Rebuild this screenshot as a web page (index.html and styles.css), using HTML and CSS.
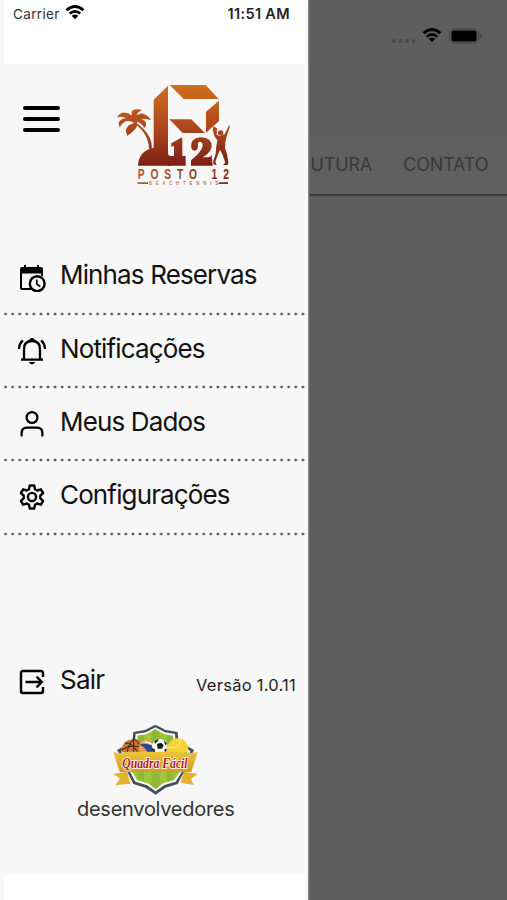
FILE: index.html
```html
<!DOCTYPE html>
<html lang="pt-BR">
<head>
<meta charset="utf-8">
<title>Posto 12</title>
<link rel="stylesheet" href="styles.css">
</head>
<body>
<div class="app">
  <aside class="drawer">
    <div class="status">
      <span class="carrier">Carrier</span>
      <svg class="wifi" viewBox="0 0 20 15"><path d="M1.5 5.2Q10-2.2 18.5 5.2M4.7 8.6Q10 4 15.3 8.6" fill="none" stroke="#000" stroke-width="2.7"/><path d="M6.7 10.8Q10 8.2 13.3 10.8L10 14.3Z"/></svg>
      <time class="clock">11:51 AM</time>
    </div>
    <header class="head">
      <button class="burger" aria-label="Menu"><i></i><i></i><i></i></button>
      <svg class="logo" viewBox="0 0 420 360">
        <defs><linearGradient id="rust" gradientUnits="userSpaceOnUse" x1="0" y1="30" x2="0" y2="300"><stop offset="0" stop-color="#ce701f"/><stop offset=".45" stop-color="#b0491d"/><stop offset="1" stop-color="#6e1714"/></linearGradient>
        <linearGradient id="plate" x2="1"><stop stop-color="#b9571f"/><stop offset="1" stop-color="#7d2a1a"/></linearGradient></defs>
        <g fill="url(#rust)">
          <path d="M146 74L189 32V236Q190 243 198 243V272H99Q101 227 146 218Z"/>
          <path d="M194 30H302L341 72H236Z"/>
          <path d="M342 77V138L303 173V110Z"/>
          <path d="M193 133H259L300 174H233Z"/>
          <path d="M188 243H207V212L199 216V205L228 188H232V243H242V272H188Z"/>
          <path d="M259 219Q255 188 289 187Q320 189 320 214Q319 232 293 247H310Q317 246 320 240L323 272H258V256Q291 231 293 211Q293 200 284 200Q277 201 279 213Q279 226 268 227Q260 226 259 219Z"/>
          <path d="M88 142Q118 157 133 186Q142 205 140 222L132 221Q132 192 111 166Q98 151 86 148Z"/>
          <path d="M88 143Q69 134 57 142Q45 152 45 158Q36 143 47 135Q56 128 65 130Q51 122 36 127Q45 111 62 113Q74 114 81 122Q74 103 96 103Q106 102 110 107Q98 109 95 121Q108 111 122 119Q135 127 137 136Q122 130 109 133Q122 137 123 145Q125 154 117 159Q113 145 96 140Q99 153 90 163Q81 174 67 182Q57 162 72 151Z"/>
          <circle cx="347" cy="174" r="8"/>
          <path d="M372 151L375 154L365 184L361 202L360 219L366 237L370 262L368 270H354L361 263L352 238L345 224L337 244L331 260L335 271L325 268V257L332 237L334 214L337 195L329 185L323 164L325 154L336 160L335 179L345 184L359 178Z"/>
        </g>
        <g fill="url(#plate)">
          <text class="brand-name" transform="translate(98 311) scale(.7 1)" textLength="391">POSTO 12</text>
          <text class="brand-sub" transform="translate(132 331) scale(.8 1)" textLength="259">BEACHTENNIS</text>
          <path d="M98 322H129V327H98ZM341 322H369V327H341Z"/>
        </g>
      </svg>
    </header>
    <nav class="menu">
      <a class="item"><svg class="ico" viewBox="0 0 28 28"><path d="M4 3H6V1H8V3H19V1H21V3H23Q25 3 25 5V12.4A8.4 8.4 0 0 0 23 11.5V9.5H4V24H13L15 26H4Q2 26 2 24V5Q2 3 4 3Z"/><circle cx="19.2" cy="19.7" r="7.4" fill="none" stroke="#000" stroke-width="2.4"/><path d="M18.8 15.5V20L22.3 22.7" fill="none" stroke="#000" stroke-width="1.6"/></svg><span class="t1">Minhas Reservas</span></a>
      <a class="item"><svg class="ico" viewBox="0 0 28 28"><g fill="none" stroke="#000" stroke-width="2.3"><path d="M3 22.7H25M6 22V12Q6 4 14 4T22 12V22M5 3.5Q1.2 6.5 1 12M23 3.5Q26.8 6.5 27 12" /></g><path d="M11 4.5A3 3.6 0 0 1 17 4.5ZM11 25H17Q16.3 27.4 14 27.4T11 25Z"/></svg><span>Notificações</span></a>
      <a class="item"><svg class="ico" viewBox="0 0 28 28"><g fill="none" stroke="#000" stroke-width="2.3" stroke-linecap="round"><circle cx="14" cy="7.5" r="5.4"/><path d="M3.6 25.5V23Q3.6 17.6 9 17.6H19Q24.4 17.6 24.4 23V25.5"/></g></svg><span>Meus Dados</span></a>
      <a class="item"><svg class="ico" viewBox="0 0 28 28"><g fill="none" stroke="#000" stroke-width="2.4" stroke-linejoin="round"><path d="M11.8 2.5H16.2L17 6.2L19.2 7.5L22.9 6.3L25.1 10.1L22.3 12.7V15.3L25.1 17.9L22.9 21.7L19.2 20.5L17 21.8L16.2 25.5H11.8L11 21.8L8.8 20.5L5.1 21.7L2.9 17.9L5.7 15.3V12.7L2.9 10.1L5.1 6.3L8.8 7.5L11 6.2Z"/><circle cx="14" cy="14" r="4.1"/></g></svg><span>Configurações</span></a>
    </nav>
    <footer class="foot">
      <div class="exit">
        <svg class="ico" viewBox="0 0 28 28"><g fill="none" stroke="#000" stroke-width="2.4"><path d="M25 9V5Q25 3 23 3H5Q3 3 3 5V23Q3 25 5 25H23Q25 25 25 23V19"/><path d="M7.5 14H23.5M18.5 8.7L23.8 14L18.5 19.3"/></g></svg>
        <span class="exit-label">Sair</span>
        <span class="version">Versão 1.0.11</span>
      </div>
      <svg class="badge" viewBox="126 24 270 222">
        <defs><linearGradient id="gold" x2="0" y2="1"><stop stop-color="#edc43a"/><stop offset="1" stop-color="#d79c22"/></linearGradient>
        <clipPath id="balls"><path d="M126 24H396V111H126Z"/></clipPath></defs>
        <path d="M133 176L175 170L184 206L139 211L153 191ZM386 176L344 170L335 203L375 210L366 192Z" fill="#e3b22e"/>
        <path d="M259 29L290 45L326 51L328 77L375 105L352 150L345 170L326 207L290 218L260 239L229 218L193 207L175 170L166 140L144 105L190 80L193 51L228 45Z" fill="#464f59"/>
        <path d="M259 37L288 52L318 57L320 83L364 108L339 170L320 200L286 210L260 229L233 210L199 200L183 170L156 108L197 86L200 57L231 52Z" fill="#fff"/>
        <path d="M259 43L286 57L312 62L315 86L355 112L333 170L315 195L283 205L260 222L236 205L204 195L189 170L163 112L204 87L206 62L233 57Z" fill="#9ec63b"/>
        <path d="M259 43L272 50V213L260 222L248 213V50ZM225 59L206 62V195L225 201ZM294 59L312 62V195L294 201Z" fill="#86b332" opacity=".65"/>
        <g clip-path="url(#balls)">
          <circle cx="194" cy="109" r="37" fill="#c97732"/>
          <path d="M158 105Q194 80 230 105M194 72V111M175 111Q177 86 196 72Q215 86 218 111M167 84Q190 82 205 111" fill="none" stroke="#302019" stroke-width="3"/>
          <circle cx="232" cy="97" r="23" fill="#ef9c50"/><path d="M211 89Q231 82 254 94L247 115H237Q231 97 211 89Z" fill="#24489b"/><path d="M219 81Q242 75 253 91Q235 82 219 81Z" fill="#fff"/>
          <circle cx="272" cy="95" r="23" fill="#f4f5f5"/>
          <path d="M264 87L275 83L284 90L279 101H266ZM256 78L268 72L267 78L258 86ZM285 76L294 87L288 90ZM249 99L257 103L258 113H251ZM286 103L294 101L288 113Z" fill="#15191c"/>
          <circle cx="326" cy="102" r="32" fill="#f6d437"/><path d="M296 98Q327 105 337 73" fill="none" stroke="#fff099" stroke-width="3"/>
        </g>
        <path d="M133 112Q155 117 180 110H339Q362 117 386 111L367 171H152Z" fill="url(#gold)"/>
        <text class="badge-name" transform="translate(160 158) scale(.68 1)" textLength="288" lengthAdjust="spacingAndGlyphs">Quadra Fácil</text>
      </svg>
      <p class="dev">desenvolvedores</p>
    </footer>
    <div class="safe"></div>
  </aside>
  <main class="page">
    <div class="page-status">
      <span class="signal"><i></i><i></i><i></i><i></i></span>
      <svg class="wifi" viewBox="0 0 20 15"><path d="M1.5 5.2Q10-2.2 18.5 5.2M4.7 8.6Q10 4 15.3 8.6" fill="none" stroke="#000" stroke-width="2.7"/><path d="M6.7 10.8Q10 8.2 13.3 10.8L10 14.3Z"/></svg>
      <svg class="battery" viewBox="0 0 33 16"><rect x=".8" y=".8" width="28.4" height="14.4" rx="4" fill="none" stroke="#484848" stroke-width="1.2"/><rect x="2.5" y="2.5" width="25" height="11" rx="2"/><path d="M30.5 5.5Q33 6 33 8T30.5 10.5Z" fill="#444"/></svg>
    </div>
    <div class="tabs"><span class="tab first">FUTURA</span><span class="tab">CONTATO</span></div>
  </main>
</div>
</body>
</html>
```
FILE: styles.css
```css
* { box-sizing: border-box; }
body { margin: 0; font-family: Inter, "Liberation Sans", sans-serif; color: #111; }
.app { display: flex; width: 507px; height: 900px; overflow: hidden; background: #5e5e5e; }
.drawer { display: flex; flex-direction: column; width: 309px; flex: none; background: #f7f7f7; border-right: 1px solid #888; }
.status { display: flex; align-items: flex-start; height: 64px; flex: none; margin: 0 3px 0 4px; padding: 5px 16px 0 9px; background: #fff; }
.carrier { font-size: 13.5px; line-height: 18px; color: #333; letter-spacing: .35px; }
.wifi { width: 20px; height: 15px; flex: none; }
.status .wifi { margin-left: 5px; }
.clock { margin-left: auto; font-size: 14.5px; line-height: 18px; font-weight: 600; letter-spacing: .35px; margin-right: -1px; color: #222; }
.head { display: flex; height: 177px; flex: none; padding: 11px 0 0 23px; }
.burger { display: flex; flex-direction: column; gap: 7px; width: 37px; margin: 31px 45px 0 0; padding: 0; border: 0; background: none; }
.burger i { display: block; height: 4px; border-radius: 2px; background: #000; }
.logo { width: 140px; height: 120px; flex: none; }
.brand-name { font: 700 44px "Liberation Sans", sans-serif; }
.brand-sub { font: 400 16px "Liberation Sans", sans-serif; }
.menu { padding-left: 2px; flex: none; }
.item { display: flex; align-items: flex-start; height: 73.4px; padding: 16px 0 0 16px; font-size: 26px; line-height: 34px; letter-spacing: -.86px; background: radial-gradient(circle, #555 1px, transparent 1.7px) 0 100% / 7.09px 4px repeat-x; }
.item:first-child { height: 74.6px; padding-top: 17px; }
.ico { width: 28px; height: 28px; flex: none; margin: 5px 14px 0 0; }
.item:first-child .ico { margin-top: 6px; }
.foot { flex: none; height: 338px; padding: 127px 0 0 18px; }
.exit { display: flex; height: 60px; }
.exit-label { font-size: 26px; line-height: 34px; letter-spacing: -.8px; }
.version { margin: 12px 12px 0 auto; font-size: 16.5px; line-height: 20px; letter-spacing: .25px; color: #222; }
.badge { display: block; width: 90px; height: 74px; margin: 0 0 0 93px; }
.badge-name { font: italic 700 45px "Liberation Serif", serif; fill: #a91e27; stroke: #fff; stroke-width: 5px; paint-order: stroke; }
.dev { margin: -1px 0 0 59px; font-size: 20px; line-height: 26px; letter-spacing: -.27px; color: #333; }
.safe { height: 27px; margin: 0 3px 0 4px; background: #fff; flex: none; }
.page { flex: 1; min-width: 0; background: #5e5e5e; border-left: 1px solid #666; }
.page-status { display: flex; align-items: flex-start; height: 136px; padding: 28px 0 0 82px; }
.page-status .wifi { margin-left: 7px; }
.signal { display: flex; gap: 3px; width: 23px; padding-top: 11px; }
.signal i { width: 3.5px; height: 3.5px; border-radius: 50%; background: #4a4a4a; }
.battery { width: 33px; height: 16px; margin-left: 7px; }
.tabs { display: flex; gap: 31px; height: 60px; padding-top: 17px; background: #606060; border-bottom: 2px solid #3b3b3b; font-size: 18px; line-height: 24px; letter-spacing: -.15px; color: #393939; overflow: hidden; }
.tab.first { margin-left: -10px; }
```
